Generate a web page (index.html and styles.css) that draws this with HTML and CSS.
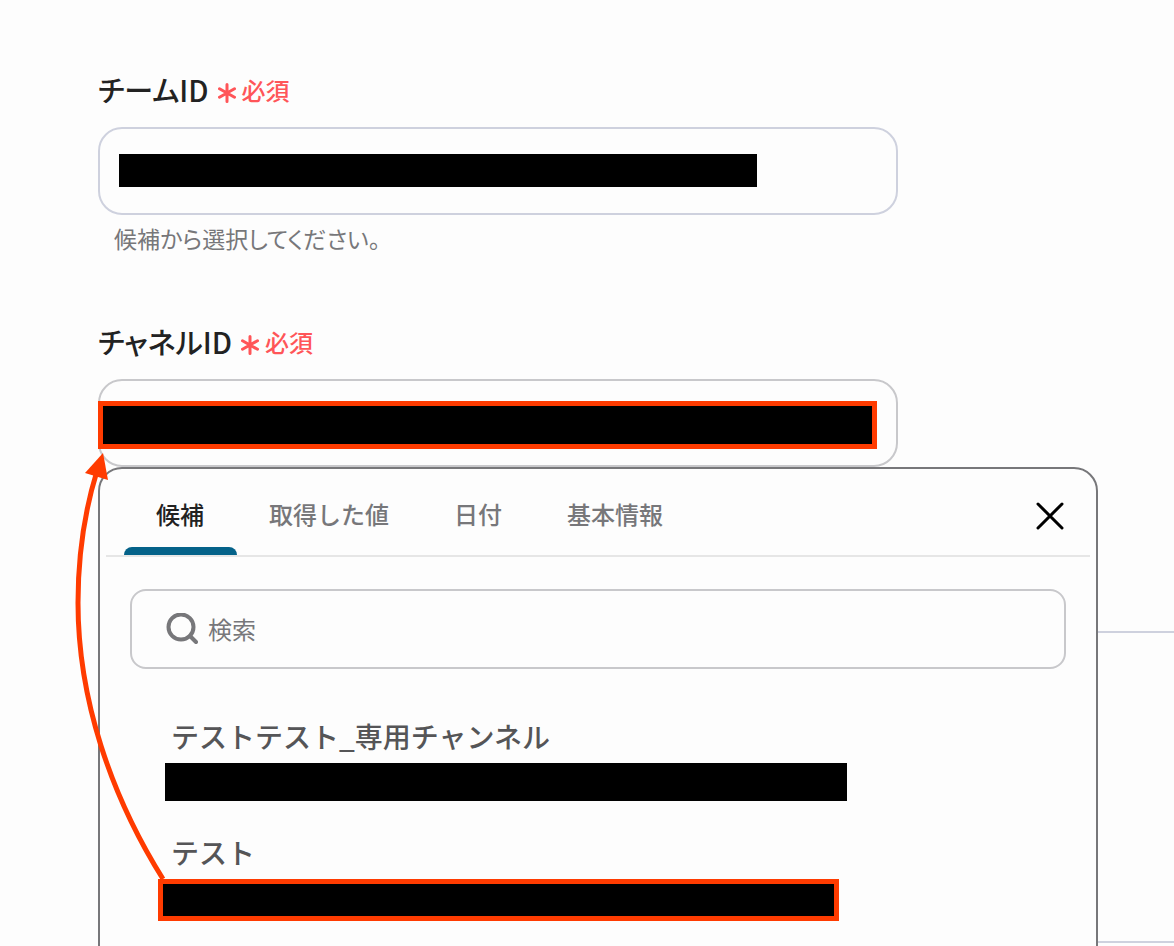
FILE: index.html
```html
<!DOCTYPE html>
<html lang="ja">
<head>
<meta charset="utf-8">
<meta name="viewport" content="width=device-width, initial-scale=1">
<title>チャネル設定</title>
<link rel="stylesheet" href="styles.css">
</head>
<body>
<main class="page">
  <form class="form">
    <div class="field">
      <div class="field-head">
        <label class="label" for="team">チームID</label>
        <span class="required"><svg class="asterisk" viewBox="0 0 18 20" aria-hidden="true"><path d="M9 1.5V18.5M1.5 5.7L16.5 14.3M16.5 5.7L1.5 14.3"/></svg>必須</span>
      </div>
      <div class="control control-cool">
        <input class="masked masked-team" id="team" type="text" readonly>
      </div>
      <p class="help">候補から選択してください。</p>
    </div>

    <div class="field">
      <div class="field-head">
        <label class="label" for="channel">チャネルID</label>
        <span class="required"><svg class="asterisk" viewBox="0 0 18 20" aria-hidden="true"><path d="M9 1.5V18.5M1.5 5.7L16.5 14.3M16.5 5.7L1.5 14.3"/></svg>必須</span>
      </div>
      <div class="control control-open">
        <input class="masked masked-channel marked" id="channel" type="text" readonly>
      </div>

      <section class="popup" aria-label="候補">
        <div class="popup-head">
          <div class="tabs" role="tablist">
            <button class="tab tab-active" type="button" role="tab" aria-selected="true">候補</button>
            <button class="tab" type="button" role="tab">取得した値</button>
            <button class="tab" type="button" role="tab">日付</button>
            <button class="tab" type="button" role="tab">基本情報</button>
          </div>
          <button class="close" type="button" aria-label="閉じる">
            <svg viewBox="0 0 28 28" aria-hidden="true"><path d="M2 2L26 26M26 2L2 26"/></svg>
          </button>
        </div>
        <label class="search">
          <svg class="search-icon" viewBox="0 0 32 32" aria-hidden="true"><circle cx="15" cy="14" r="12.5"/><path d="M24 23L30 29"/></svg>
          <input class="search-input" type="search" placeholder="検索" aria-label="検索">
        </label>
        <ul class="options">
          <li class="option">
            <span class="option-name">テストテスト_専用チャンネル</span>
            <span class="option-id"></span>
          </li>
          <li class="option">
            <span class="option-name">テスト</span>
            <span class="option-id option-id-picked marked"></span>
          </li>
        </ul>
      </section>

      <svg class="arrow" viewBox="0 0 100 430" aria-hidden="true">
        <path class="arrow-line" d="M93 428C41 345 8 248 8 152C8 106 14 62 27 20"/>
        <path class="arrow-head" d="M33 2L15 22L38 29Z"/>
      </svg>
    </div>
  </form>
  <div class="panel"></div>
</main>
</body>
</html>
```
FILE: styles.css
```css
* {
  box-sizing: border-box;
}

body {
  margin: 0;
  background: #fdfdfd;
  color: #222;
  font-family: "Noto Sans CJK JP", "Noto Sans", sans-serif;
}

.page {
  height: 100vh;
  overflow: hidden;
}

.form {
  max-width: 898px;
  padding: 69px 0 0 98px;
}

.field {
  position: relative;
  margin-bottom: 68px;
}

.field-head {
  display: flex;
  align-items: center;
  gap: 9px;
  height: 40px;
  margin-bottom: 18px;
}

.label {
  font-size: 29px;
  font-weight: 500;
  line-height: 40px;
  font-feature-settings: "palt";
}

.required {
  display: flex;
  align-items: center;
  gap: 6px;
  padding-top: 2px;
  color: #ff5558;
  font-size: 24px;
  font-weight: 500;
  line-height: 40px;
}

.asterisk {
  width: 18px;
  height: 20px;
  margin-top: 6px;
  fill: none;
  stroke: currentColor;
  stroke-width: 3;
  stroke-linecap: round;
}

.control {
  display: flex;
  align-items: center;
  height: 88px;
  border: 2px solid #ced1de;
  border-radius: 24px;
}

.control-cool {
  padding: 0 0 1px 19px;
}

.control-open {
  border-color: #c8c8cb;
}

.masked {
  padding: 0;
  border: 0;
  border-radius: 0;
  background: #000;
  outline: 0;
}

.masked-team {
  width: 638px;
  height: 33px;
}

.masked-channel {
  width: 779px;
  height: 48px;
  margin: 4px 0 0 -2px;
}

.marked {
  border: 5px solid #ff3b00;
}

.help {
  margin: 8px 0 0;
  padding-left: 16px;
  color: #77777a;
  font-size: 23px;
  line-height: 30px;
  font-feature-settings: "palt";
}

.popup {
  position: absolute;
  top: 100%;
  left: 0;
  width: 1000px;
  padding: 0 6px 30px;
  border: 2px solid #77777a;
  border-radius: 24px;
  background: #fdfdfd;
}

.popup-head {
  display: flex;
  justify-content: space-between;
  align-items: center;
  height: 88px;
  padding: 0 26px 0 18px;
  border-bottom: 2px solid #e6e6e6;
}

.tabs {
  display: flex;
  gap: 1px;
  height: 100%;
}

.tab {
  position: relative;
  padding: 4px 32px 0;
  border: 0;
  background: none;
  color: #77777a;
  font: 500 24px/36px "Noto Sans CJK JP", sans-serif;
}

.tab-active {
  color: #222;
}

.tab-active::after {
  content: "";
  position: absolute;
  right: -1px;
  bottom: 0;
  left: 0;
  height: 8px;
  border-radius: 8px 8px 0 0;
  background: #046289;
}

.close {
  display: flex;
  margin-top: 8px;
  padding: 0;
  border: 0;
  background: none;
}

.close svg {
  width: 28px;
  height: 28px;
  fill: none;
  stroke: #000;
  stroke-width: 3;
  stroke-linecap: round;
}

.search {
  display: flex;
  align-items: center;
  gap: 10px;
  height: 80px;
  margin: 32px 24px 0;
  padding: 0 34px;
  border: 2px solid #c8c8cb;
  border-radius: 16px;
}

.search-icon {
  width: 32px;
  height: 32px;
  fill: none;
  stroke: #77777a;
  stroke-width: 4;
  stroke-linecap: round;
}

.search-input {
  flex: 1;
  min-width: 0;
  padding: 0;
  border: 0;
  outline: 0;
  background: none;
  font: 24px/36px "Noto Sans CJK JP", sans-serif;
}

.search-input::placeholder {
  color: #77777a;
}

.options {
  margin: 47px 0 0;
  padding: 0 0 0 59px;
  list-style: none;
}

.option {
  height: 116px;
}

.option-name {
  display: block;
  padding-left: 6px;
  color: #555557;
  font-size: 28px;
  font-weight: 500;
  line-height: 40px;
}

.option-id {
  display: block;
  width: 682px;
  height: 38px;
  margin-top: 7px;
  background: #000;
}

.option-id-picked {
  width: 681px;
  height: 42px;
  margin-left: -7px;
}

.arrow {
  position: absolute;
  top: 130px;
  left: -28px;
  width: 100px;
  height: 430px;
}

.arrow-line {
  fill: none;
  stroke: #ff3b00;
  stroke-width: 5;
}

.arrow-head {
  fill: #ff3b00;
}

.panel {
  height: 312px;
  margin: 164px 0 0 98px;
  border: solid #ced1de;
  border-width: 2px 0;
}
```
